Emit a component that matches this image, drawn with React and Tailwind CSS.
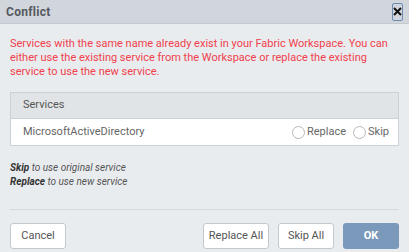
import React, { useState } from 'react';

const Radio = ({ label, checked, onChange }) => (
  <label className="flex items-center gap-[2px] cursor-pointer" onClick={onChange}>
    <span className="w-[13px] h-[13px] rounded-full border border-[#b5b9bd] bg-white flex items-center justify-center">
      {checked && <span className="w-[7px] h-[7px] rounded-full bg-[#5b7fa6]" />}
    </span>
    <span>{label}</span>
  </label>
);

export default function App() {
  const [choice, setChoice] = useState(null);

  return (
    <div className="w-[409px] h-[252px] bg-[#e9ecef] flex flex-col font-['Roboto',sans-serif] overflow-hidden">
      {/* Title bar */}
      <div className="h-[24px] bg-[#d1d5dc] border-b border-[#c4c9d0] flex items-center justify-between pl-[6px] pr-[6px]">
        <span className="text-[12px] font-bold text-[#555a60] tracking-[0.3px]">Conflict</span>
        <button className="w-[11px] h-[18px] border border-[#6a8cb3] rounded-[2px] flex items-center justify-center">
          <svg width="9" height="9" viewBox="0 0 9 9">
            <path d="M1 1L8 8M8 1L1 8" stroke="#111" strokeWidth="2" />
          </svg>
        </button>
      </div>

      <div className="flex-1 flex flex-col px-[10px]">
        <p className="mt-[13px] text-[11px] leading-[14px] text-[#f0414c]">
          Services with the same name already exist in your Fabric Workspace. You can either use the existing service from the Workspace or replace the existing service to use the new service.
        </p>

        {/* Services table */}
        <div className="mt-[13px] border border-[#cdd1d5]">
          <div className="h-[26px] bg-[#e1e4e7] border-b border-[#cdd1d5] flex items-center pl-[12px] text-[11px] text-[#555]">
            Services
          </div>
          <div className="h-[26px] bg-white flex items-center justify-between pl-[12px] pr-[9px] text-[11px] text-[#666]">
            <span>MicrosoftActiveDirectory</span>
            <div className="flex items-center gap-[7px]">
              <Radio label="Replace" checked={choice === 'replace'} onChange={() => setChoice('replace')} />
              <Radio label="Skip" checked={choice === 'skip'} onChange={() => setChoice('skip')} />
            </div>
          </div>
        </div>

        <div className="mt-[15px] text-[10px] leading-[14px] italic text-[#555]">
          <div><span className="font-bold text-[#333]">Skip</span> to use original service</div>
          <div><span className="font-bold text-[#333]">Replace</span> to use new service</div>
        </div>

        <div className="mt-[20px] border-t border-[#d6dade]" />

        <div className="mt-[13px] flex items-center text-[11px]">
          <button className="w-[56px] h-[26px] bg-white border border-[#c4c8cc] rounded-[3px] text-[#555]">Cancel</button>
          <div className="flex-1" />
          <button className="w-[66px] h-[26px] bg-white border border-[#c4c8cc] rounded-[3px] text-[#555]">Replace All</button>
          <button className="ml-[9px] w-[56px] h-[26px] bg-white border border-[#c4c8cc] rounded-[3px] text-[#555]">Skip All</button>
          <button className="ml-[9px] w-[56px] h-[26px] bg-[#7b9abb] rounded-[3px] text-white font-bold">OK</button>
        </div>
      </div>
    </div>
  );
}
